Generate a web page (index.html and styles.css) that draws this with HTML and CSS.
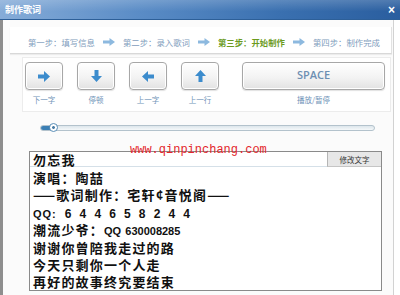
FILE: index.html
```html
<!DOCTYPE html>
<html>
<head>
<meta charset="utf-8">
<link rel="stylesheet" href="styles.css">
</head>
<body>
<div class="titlebar">
  <span class="title">制作歌词</span>
  <span class="close">×</span>
</div>
<div class="frame">
  <div class="steps">
    <span class="step">第一步：填写信息</span>
    <svg class="sarrow" width="12" height="8" viewBox="0 0 12 8"><path d="M0 2.5h6.5V0L12 4 6.5 8V5.5H0z" fill="#8db9df"/></svg>
    <span class="step">第二步：录入歌词</span>
    <svg class="sarrow" width="12" height="8" viewBox="0 0 12 8"><path d="M0 2.5h6.5V0L12 4 6.5 8V5.5H0z" fill="#8db9df"/></svg>
    <span class="step active">第三步：开始制作</span>
    <svg class="sarrow" width="12" height="8" viewBox="0 0 12 8"><path d="M0 2.5h6.5V0L12 4 6.5 8V5.5H0z" fill="#8db9df"/></svg>
    <span class="step">第四步：制作完成</span>
  </div>
  <div class="panel">
    <div class="ctl">
      <div class="btn"><svg width="12" height="11" viewBox="0 0 12 11"><path d="M0 3.5h6V0l6 5.5L6 11V7.5H0z" fill="#3c8ccd"/></svg></div>
      <div class="lbl">下一字</div>
    </div>
    <div class="ctl">
      <div class="btn"><svg width="11" height="12" viewBox="0 0 11 12"><path d="M3.5 0h4v6H11l-5.5 6L0 6h3.5z" fill="#3c8ccd"/></svg></div>
      <div class="lbl">停顿</div>
    </div>
    <div class="ctl">
      <div class="btn"><svg width="12" height="11" viewBox="0 0 12 11"><path d="M12 3.5H6V0L0 5.5 6 11V7.5h6z" fill="#3c8ccd"/></svg></div>
      <div class="lbl">上一字</div>
    </div>
    <div class="ctl">
      <div class="btn"><svg width="11" height="12" viewBox="0 0 11 12"><path d="M3.5 12h4V6H11L5.5 0 0 6h3.5z" fill="#3c8ccd"/></svg></div>
      <div class="lbl">上一行</div>
    </div>
    <div class="ctl wide">
      <div class="btn space">SPACE</div>
      <div class="lbl">播放/暂停</div>
    </div>
  </div>
  <div class="slider">
    <div class="fill"></div>
    <div class="thumb"></div>
  </div>
  <div class="editor">
    <div class="watermark">www.qinpinchang.com</div>
    <div class="head">
      <span class="song">勿忘我</span>
      <span class="edit">修改文字</span>
    </div>
    <div class="lyrics">
      <div class="line">演唱：陶喆</div>
      <div class="line">——歌词制作：宅轩¢音悦阁——</div>
      <div class="line"><span class="qq">QQ:</span><span class="spaced">6 4 4 6 5 8 2 4 4</span></div>
      <div class="line">潮流少爷：<span class="qq2">QQ</span> <span class="num">630008285</span></div>
      <div class="line">谢谢你曾陪我走过的路</div>
      <div class="line">今天只剩你一个人走</div>
      <div class="line">再好的故事终究要结束</div>
    </div>
  </div>
</div>
</body>
</html>
```
FILE: styles.css
```css
* { box-sizing: border-box; }
html, body { margin: 0; padding: 0; }
body {
  width: 400px;
  height: 295px;
  overflow: hidden;
  background: #ffffff;
  font-family: "Noto Sans CJK SC", "Liberation Sans", sans-serif;
}
.titlebar {
  height: 20px;
  display: flex;
  align-items: center;
  justify-content: space-between;
  padding: 0 5px 0 5px;
  background: linear-gradient(to bottom, rgba(255,255,255,0.18), rgba(255,255,255,0) 60%),
              linear-gradient(to right, #86acd8, #5a8cc6 35%, #3a70b0 70%, #2a5e9f);
  border-bottom: 1px solid #2d5f98;
}
.title {
  color: #ffffff;
  font-size: 9px;
  font-weight: bold;
  line-height: 1;
}
.close {
  color: #ffffff;
  font-family: "Liberation Sans", sans-serif;
  font-size: 12px;
  font-weight: bold;
  line-height: 1;
}
.frame {
  height: 275px;
  width: 394px;
  border-left: 3px solid #8e8e8e;
  border-right: 1px solid #d2d2d2;
  background: #fbfbfb;
  padding-top: 7px;
  position: relative;
}
.steps {
  margin-left: 7px;
  width: 382px;
  height: 27px;
  background: #ffffff;
  border-bottom: 1px solid #d8d8d8;
  border-right: 1px solid #e2e2e2;
  box-shadow: 0 1px 1px rgba(0,0,0,0.06);
  display: flex;
  align-items: center;
  padding: 4px 0 0 18px;
}
.step {
  font-size: 8.4px;
  color: #7f9dbd;
  white-space: nowrap;
  line-height: 1;
}
.step.active {
  color: #6c9b1e;
  font-weight: bold;
}
.sarrow {
  margin: 0 8px;
}
.panel {
  margin: 3px 0 0 19px;
  width: 369px;
  height: 55px;
  background: #ffffff;
  border: 1px solid #ececec;
  display: flex;
  align-items: flex-start;
  gap: 14px;
  padding: 4px 0 0 2px;
}
.ctl {
  display: flex;
  flex-direction: column;
  align-items: center;
}
.ctl.wide {
  margin-left: 9px;
}
.btn {
  width: 38px;
  height: 28px;
  border: 1px solid #a7a7a7;
  border-radius: 4px;
  background: linear-gradient(to bottom, #ffffff, #f3f3f3 55%, #e2e2e2);
  box-shadow: inset 0 0 0 1px #ffffff, 0 1px 1px rgba(0,0,0,0.12);
  display: flex;
  align-items: center;
  justify-content: center;
}
.btn.space {
  width: 143px;
  font-family: "Open Sans", "Liberation Sans", sans-serif;
  font-size: 11px;
  font-weight: 600;
  color: #6d8fb2;
  padding-bottom: 4px;
}
.lbl {
  margin-top: 6px;
  font-size: 7.5px;
  color: #6f93b8;
  line-height: 1;
}
.slider {
  position: relative;
  margin: 13px 0 0 37px;
  width: 335px;
  height: 6px;
  border: 1px solid #b3c2cc;
  border-radius: 3px;
  background: linear-gradient(to bottom, #dde6ec, #f5f8fa);
}
.fill {
  width: 13px;
  height: 100%;
  background: #3b7fb4;
  border-radius: 3px 0 0 3px;
}
.thumb {
  position: absolute;
  left: 8px;
  top: -3px;
  width: 9px;
  height: 9px;
  border-radius: 50%;
  background: radial-gradient(circle, #4a7da6 0 1.2px, #ffffff 1.6px);
  border: 1px solid #5a8fb8;
}
.editor {
  position: relative;
  margin: 20px 0 0 26px;
  width: 353px;
  height: 140px;
  border: 1px solid #8a8a8a;
  background: #ffffff;
}
.watermark {
  position: absolute;
  left: 100px;
  top: -8px;
  font-family: "Liberation Mono", monospace;
  font-size: 12px;
  color: #e3262c;
  line-height: 12px;
  white-space: nowrap;
}
.head {
  height: 15px;
  border-bottom: 1px solid #d5e0e8;
  display: flex;
  align-items: center;
  justify-content: space-between;
  padding-left: 3px;
}
.song, .line {
  font-size: 13px;
  font-weight: bold;
  letter-spacing: 1.2px;
  color: #111111;
  line-height: 1;
}
.edit {
  align-self: flex-start;
  width: 54px;
  height: 15px;
  background: #e7e7e7;
  border-left: 1px solid #b5b5b5;
  border-bottom: 1px solid #c5c5c5;
  font-size: 7.5px;
  color: #333333;
  display: flex;
  align-items: center;
  justify-content: center;
}
.lyrics {
  padding: 2px 0 0 3px;
}
.line {
  height: 17.4px;
  line-height: 17.4px;
  white-space: nowrap;
}
.qq {
  font-family: "Liberation Sans", sans-serif;
  font-size: 11px;
  letter-spacing: 1px;
  margin-right: 8px;
}
.spaced {
  font-family: "Liberation Sans", sans-serif;
  font-size: 12px;
  letter-spacing: 2.4px;
}
.qq2 {
  font-family: "Liberation Sans", sans-serif;
  font-size: 11px;
  letter-spacing: 0;
}
.num {
  font-family: "Liberation Sans", sans-serif;
  font-size: 11px;
  letter-spacing: 0;
}
```
